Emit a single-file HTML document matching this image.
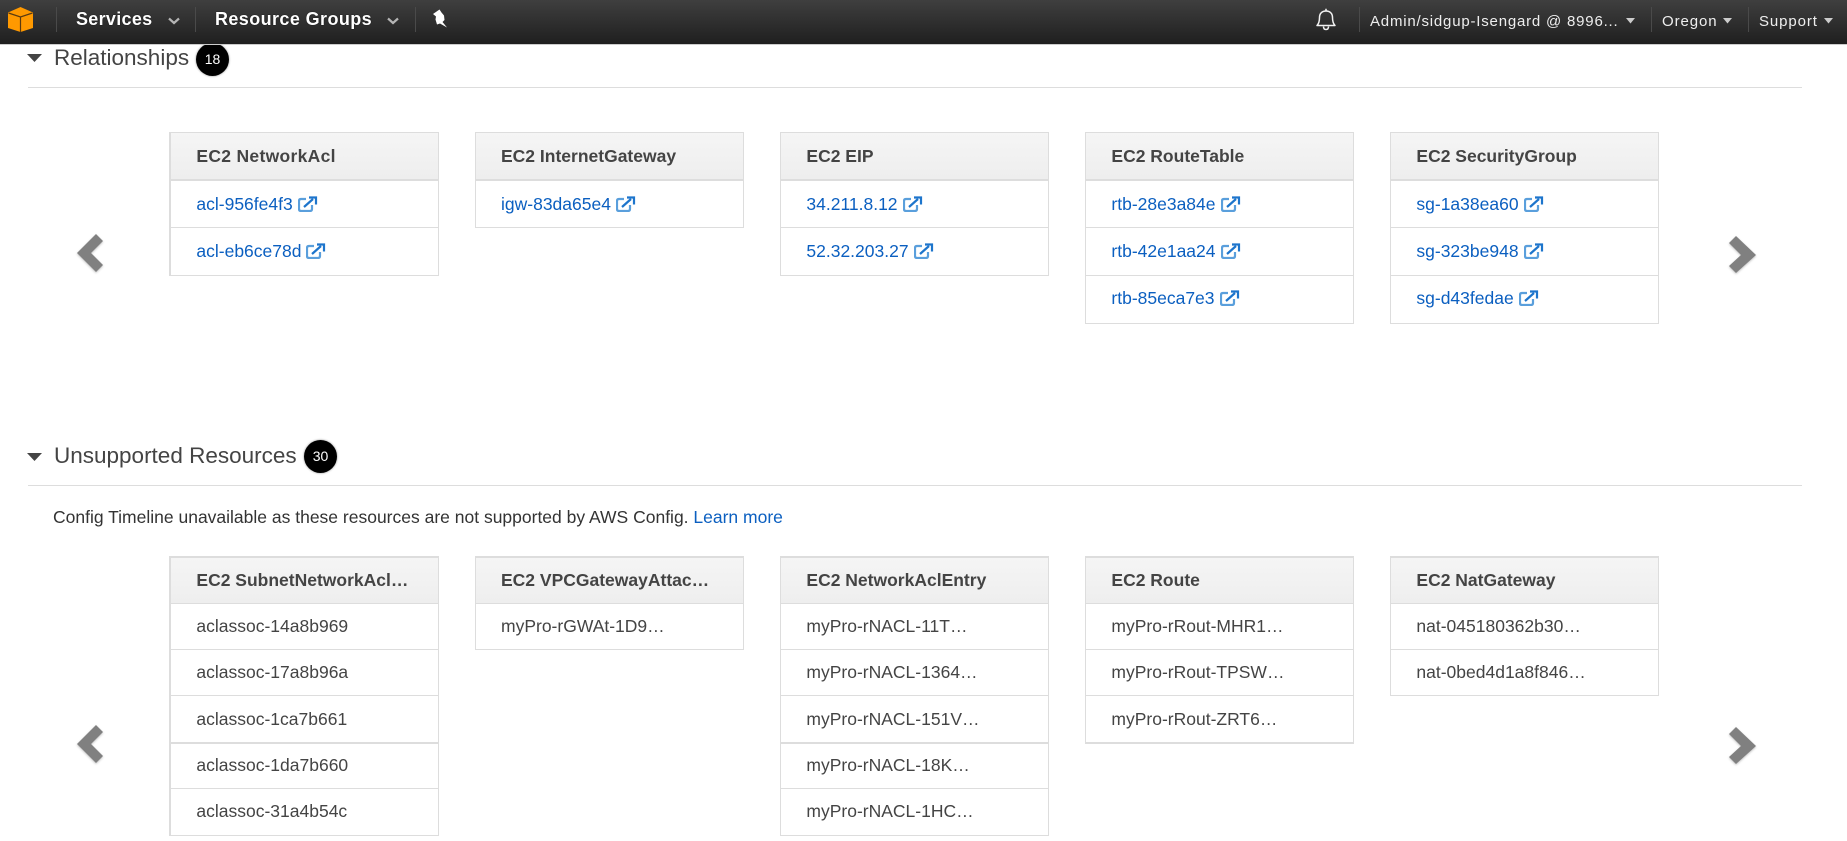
<!DOCTYPE html>
<html><head><meta charset="utf-8"><title>Relationships</title>
<style>
html,body{margin:0;padding:0;width:1847px;height:841px;overflow:hidden;background:#fff}
body{position:relative;font-family:"Liberation Sans",Arial,sans-serif;color:#444}
.a{position:absolute;white-space:nowrap}
#top{position:absolute;left:0;top:0;width:1847px;height:44px;background:linear-gradient(#3f3f3f,#1f1f1f);border-bottom:1px solid #ccc;z-index:5}
.d{position:absolute;top:7px;height:25px;width:1px;background:#4a4a4a}
.n{position:absolute;top:0;line-height:39px;color:#fff;font-weight:bold;font-size:18px;letter-spacing:.3px;white-space:nowrap;text-shadow:0 0 1px #000}
.m{position:absolute;top:0;line-height:43px;color:#eee;font-size:15px;letter-spacing:.9px;white-space:nowrap}
.t{position:absolute;font-size:22.5px;line-height:30px;color:#444;white-space:nowrap}
.b{position:absolute;width:33px;height:33px;border-radius:50%;background:#000;color:#fff;font-size:14px;line-height:33px;text-align:center;box-shadow:0 0 2px #888}
.l{position:absolute;left:28px;width:1774px;height:1px;background:#ddd}
.c{position:absolute;width:269px;box-sizing:border-box;border-left:1px solid #ddd;border-right:1px solid #ddd;border-top:1px solid #ddd}
.h{box-sizing:border-box;background:linear-gradient(#f5f5f5,#eee);font-weight:bold;font-size:17.5px;padding-left:25.4px;color:#444;white-space:nowrap;overflow:hidden}
.r{box-sizing:border-box;padding-left:25.4px;font-size:17.5px;color:#444;border-bottom:1px solid #ddd;white-space:nowrap;overflow:hidden}
.r a{color:#0b5fc0;text-decoration:none}
.r svg{vertical-align:-2px;margin-left:5px}
.s1{top:132px}
.s1 .h{height:48px;line-height:47px;border-bottom:2px solid #ddd}
.s1 .r{height:47px;line-height:46px}
.s1 .r:nth-child(3){height:48px;line-height:46px}
.s1 .r:nth-child(4){height:48px;line-height:45px}
.s2{top:556px;border-top-width:2px}
.s2 .h{height:46px;line-height:45px;border-bottom:1px solid #ddd}
.s2 .r{height:46px;line-height:44px}
.s2 .r:nth-child(4){height:48px;border-bottom-width:2px;line-height:46px}
.s2 .r:nth-child(5){height:45px;line-height:42px}
.s2 .r:nth-child(6){height:47px;line-height:44px}
.x1{left:169px;width:270px;border-left-width:2px}
.x2{left:475px}
.x2 .h,.x2 .r{padding-left:25px}
.x3{left:780px}
.x4{left:1085px}
.x5{left:1390px}
</style></head><body>

<div id="top">
<svg class="a" style="left:8px;top:7px" width="25" height="25" viewBox="0 0 25 25"><polygon points="12.5,0 25,5.5 25,21 12.5,25 0,21 0,5.5" fill="#f90"/><path d="M0.5 6L12.5 10L24.5 6M12.5 10V25" fill="none" stroke="#5a3a10" stroke-width="1.2"/></svg>
<div class="d" style="left:56px"></div>
<div class="n" style="left:76px">Services</div>
<svg class="a" style="left:168px;top:17px" width="12" height="8" viewBox="0 0 12 8"><path d="M1 1.5L6 6L11 1.5" fill="none" stroke="#b5b5b5" stroke-width="2.2"/></svg>
<div class="d" style="left:195px"></div>
<div class="n" style="left:215px;letter-spacing:.4px">Resource Groups</div>
<svg class="a" style="left:387px;top:17px" width="12" height="8" viewBox="0 0 12 8"><path d="M1 1.5L6 6L11 1.5" fill="none" stroke="#b5b5b5" stroke-width="2.2"/></svg>
<div class="d" style="left:415px"></div>
<svg class="a" style="left:432px;top:8px" width="16" height="20" viewBox="0 0 16 20"><path d="M1 6L7.500 1.500L9.500 4.500L12 7.500L12.500 12L10.500 14L15 19.500L8 15.500L5 16.500L3.500 11.500L4 8.500Z" fill="#fff"/></svg>

<svg class="a" style="left:1315px;top:8px" width="22" height="23" viewBox="0 0 22 23"><path d="M2 17.5C4 15.5 4.5 13 4.5 9.5C4.5 5.5 7 3 11 3C15 3 17.500 5.5 17.500 9.500C17.500 13 18 15.500 20 17.500Z" fill="none" stroke="#f2f2f2" stroke-width="1.5" stroke-linejoin="round"/><path d="M11 .7V3M8.500 18.500C8.500 20.500 9.500 21.500 11 21.500C12.500 21.500 13.500 20.500 13.500 18.500" fill="none" stroke="#f2f2f2" stroke-width="1.5"/></svg>
<div class="d" style="left:1359px"></div>
<div class="m" style="left:1370px;letter-spacing:.8px">Admin/sidgup-Isengard @ 8996...</div>
<svg class="a" style="left:1626px;top:18px" width="9" height="6" viewBox="0 0 9 6"><path d="M0 0H9L4.500 5.500Z" fill="#ccc"/></svg>
<div class="d" style="left:1651px"></div>
<div class="m" style="left:1662px">Oregon</div>
<svg class="a" style="left:1723px;top:18px" width="9" height="6" viewBox="0 0 9 6"><path d="M0 0H9L4.500 5.500Z" fill="#ccc"/></svg>
<div class="d" style="left:1748px"></div>
<div class="m" style="left:1759px">Support</div>
<svg class="a" style="left:1824px;top:18px" width="9" height="6" viewBox="0 0 9 6"><path d="M0 0H9L4.500 5.500Z" fill="#ccc"/></svg>
</div>

<svg class="a" style="left:27px;top:54px" width="15" height="8" viewBox="0 0 15 8"><path d="M0 0H15L7.500 8Z" fill="#444"/></svg>
<div class="t" style="left:54px;top:43px">Relationships</div>
<div class="b" style="left:196px;top:43px">18</div>
<div class="l" style="top:87px"></div>

<div class="c s1 x1"><div class="h" style="letter-spacing:.3px">EC2 NetworkAcl</div>
<div class="r"><a>acl-956fe4f3</a><svg width="20" height="16" viewBox="0 0 20 16"><path d="M8 3H3Q1 3 1 5V13Q1 15 3 15H12Q14 15 14 13V9" fill="none" stroke="#5a9fdc" stroke-width="2.200"/><path d="M6 11L15 3M11 1.500H18V8.500" fill="none" stroke="#1d75cc" stroke-width="2.200"/></svg></div>
<div class="r"><a>acl-eb6ce78d</a><svg width="20" height="16" viewBox="0 0 20 16"><path d="M8 3H3Q1 3 1 5V13Q1 15 3 15H12Q14 15 14 13V9" fill="none" stroke="#5a9fdc" stroke-width="2.200"/><path d="M6 11L15 3M11 1.500H18V8.500" fill="none" stroke="#1d75cc" stroke-width="2.200"/></svg></div></div>

<div class="c s1 x2"><div class="h">EC2 InternetGateway</div>
<div class="r"><a>igw-83da65e4</a><svg width="20" height="16" viewBox="0 0 20 16"><path d="M8 3H3Q1 3 1 5V13Q1 15 3 15H12Q14 15 14 13V9" fill="none" stroke="#5a9fdc" stroke-width="2.200"/><path d="M6 11L15 3M11 1.500H18V8.500" fill="none" stroke="#1d75cc" stroke-width="2.200"/></svg></div></div>

<div class="c s1 x3"><div class="h">EC2 EIP</div>
<div class="r"><a>34.211.8.12</a><svg width="20" height="16" viewBox="0 0 20 16"><path d="M8 3H3Q1 3 1 5V13Q1 15 3 15H12Q14 15 14 13V9" fill="none" stroke="#5a9fdc" stroke-width="2.200"/><path d="M6 11L15 3M11 1.500H18V8.500" fill="none" stroke="#1d75cc" stroke-width="2.200"/></svg></div>
<div class="r"><a>52.32.203.27</a><svg width="20" height="16" viewBox="0 0 20 16"><path d="M8 3H3Q1 3 1 5V13Q1 15 3 15H12Q14 15 14 13V9" fill="none" stroke="#5a9fdc" stroke-width="2.200"/><path d="M6 11L15 3M11 1.500H18V8.500" fill="none" stroke="#1d75cc" stroke-width="2.200"/></svg></div></div>

<div class="c s1 x4"><div class="h">EC2 RouteTable</div>
<div class="r"><a>rtb-28e3a84e</a><svg width="20" height="16" viewBox="0 0 20 16"><path d="M8 3H3Q1 3 1 5V13Q1 15 3 15H12Q14 15 14 13V9" fill="none" stroke="#5a9fdc" stroke-width="2.200"/><path d="M6 11L15 3M11 1.500H18V8.500" fill="none" stroke="#1d75cc" stroke-width="2.200"/></svg></div>
<div class="r"><a>rtb-42e1aa24</a><svg width="20" height="16" viewBox="0 0 20 16"><path d="M8 3H3Q1 3 1 5V13Q1 15 3 15H12Q14 15 14 13V9" fill="none" stroke="#5a9fdc" stroke-width="2.200"/><path d="M6 11L15 3M11 1.500H18V8.500" fill="none" stroke="#1d75cc" stroke-width="2.200"/></svg></div>
<div class="r"><a>rtb-85eca7e3</a><svg width="20" height="16" viewBox="0 0 20 16"><path d="M8 3H3Q1 3 1 5V13Q1 15 3 15H12Q14 15 14 13V9" fill="none" stroke="#5a9fdc" stroke-width="2.200"/><path d="M6 11L15 3M11 1.500H18V8.500" fill="none" stroke="#1d75cc" stroke-width="2.200"/></svg></div></div>

<div class="c s1 x5"><div class="h">EC2 SecurityGroup</div>
<div class="r"><a>sg-1a38ea60</a><svg width="20" height="16" viewBox="0 0 20 16"><path d="M8 3H3Q1 3 1 5V13Q1 15 3 15H12Q14 15 14 13V9" fill="none" stroke="#5a9fdc" stroke-width="2.200"/><path d="M6 11L15 3M11 1.500H18V8.500" fill="none" stroke="#1d75cc" stroke-width="2.200"/></svg></div>
<div class="r"><a>sg-323be948</a><svg width="20" height="16" viewBox="0 0 20 16"><path d="M8 3H3Q1 3 1 5V13Q1 15 3 15H12Q14 15 14 13V9" fill="none" stroke="#5a9fdc" stroke-width="2.200"/><path d="M6 11L15 3M11 1.500H18V8.500" fill="none" stroke="#1d75cc" stroke-width="2.200"/></svg></div>
<div class="r"><a>sg-d43fedae</a><svg width="20" height="16" viewBox="0 0 20 16"><path d="M8 3H3Q1 3 1 5V13Q1 15 3 15H12Q14 15 14 13V9" fill="none" stroke="#5a9fdc" stroke-width="2.200"/><path d="M6 11L15 3M11 1.500H18V8.500" fill="none" stroke="#1d75cc" stroke-width="2.200"/></svg></div></div>

<svg class="a" style="left:74px;top:231px;overflow:visible" width="32" height="44" viewBox="0 0 32 44"><path d="M22 3L3 22L22 41L29 34L17 22L29 10Z" fill="#808080" style="filter:drop-shadow(0 1px 1px rgba(0,0,0,.25))"/></svg>
<svg class="a" style="left:1727px;top:233px;overflow:visible" width="32" height="44" viewBox="0 0 32 44"><path d="M9 3L29 22L9 40L2 33L14 22L2 10Z" fill="#808080" style="filter:drop-shadow(0 1px 1px rgba(0,0,0,.25))"/></svg>

<svg class="a" style="left:27px;top:453px" width="15" height="8" viewBox="0 0 15 8"><path d="M0 0H15L7.500 8Z" fill="#444"/></svg>
<div class="t" style="left:54px;top:441px">Unsupported Resources</div>
<div class="b" style="left:304px;top:440px">30</div>
<div class="l" style="top:485px"></div>
<div class="a" style="left:53px;top:505px;font-size:17.5px;line-height:24px;color:#333">Config Timeline unavailable as these resources are not supported by AWS Config. <span style="color:#0b5fc0">Learn more</span></div>

<div class="c s2 x1"><div class="h">EC2 SubnetNetworkAcl…</div>
<div class="r">aclassoc-14a8b969</div><div class="r">aclassoc-17a8b96a</div><div class="r">aclassoc-1ca7b661</div><div class="r">aclassoc-1da7b660</div><div class="r">aclassoc-31a4b54c</div></div>
<div class="c s2 x2"><div class="h">EC2 VPCGatewayAttac…</div>
<div class="r">myPro-rGWAt-1D9…</div></div>
<div class="c s2 x3"><div class="h">EC2 NetworkAclEntry</div>
<div class="r">myPro-rNACL-11T…</div><div class="r">myPro-rNACL-1364…</div><div class="r">myPro-rNACL-151V…</div><div class="r">myPro-rNACL-18K…</div><div class="r">myPro-rNACL-1HC…</div></div>
<div class="c s2 x4"><div class="h">EC2 Route</div>
<div class="r">myPro-rRout-MHR1…</div><div class="r">myPro-rRout-TPSW…</div><div class="r">myPro-rRout-ZRT6…</div></div>
<div class="c s2 x5"><div class="h">EC2 NatGateway</div>
<div class="r">nat-045180362b30…</div><div class="r">nat-0bed4d1a8f846…</div></div>

<svg class="a" style="left:74px;top:722px;overflow:visible" width="32" height="44" viewBox="0 0 32 44"><path d="M22 3L3 22L22 41L29 34L17 22L29 10Z" fill="#808080" style="filter:drop-shadow(0 1px 1px rgba(0,0,0,.25))"/></svg>
<svg class="a" style="left:1727px;top:724px;overflow:visible" width="32" height="44" viewBox="0 0 32 44"><path d="M9 3L29 22L9 40L2 33L14 22L2 10Z" fill="#808080" style="filter:drop-shadow(0 1px 1px rgba(0,0,0,.25))"/></svg>
</body></html>
